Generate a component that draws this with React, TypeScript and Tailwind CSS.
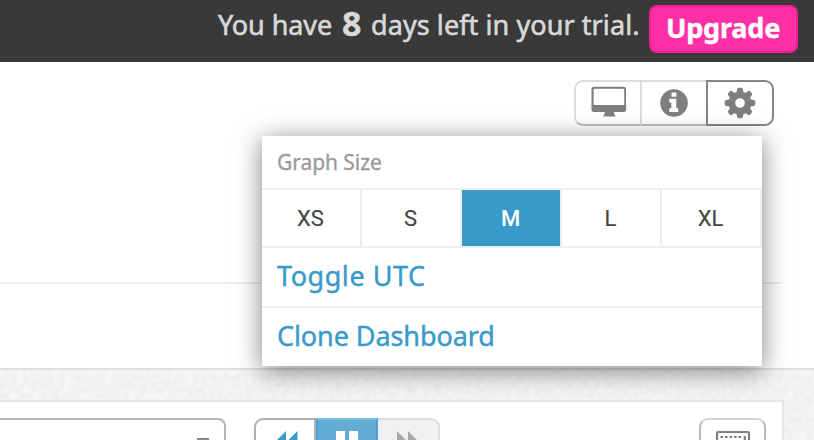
import React from "react";

const sizes = ["XS", "S", "M", "L", "XL"];

function MonitorIcon() {
  return (
    <svg width="36" height="32" viewBox="0 0 36 32" className="block">
      <path
        fill="#7f7f7f"
        fillRule="evenodd"
        d="M3 .8h29.600a2.500 2.500 0 0 1 2.500 2.500v20.100a2.500 2.500 0 0 1-2.500 2.500H22.800l.7 2.800q1 .3 1 1.900H12.200q0-1.600 1-1.900l.7-2.800H3a2.500 2.500 0 0 1-2.500-2.500V3.300A2.500 2.500 0 0 1 3 .8zm.8 1.900a1.200 1.200 0 0 0-1.200 1.200V19h30.600V3.900a1.200 1.200 0 0 0-1.200-1.200z"
      />
    </svg>
  );
}

function InfoIcon() {
  return (
    <svg width="28" height="28" viewBox="0 0 28 28" className="block">
      <circle cx="14" cy="14" r="13.800" fill="#7f7f7f" />
      <path fill="#fff" d="M11.500 3.400h4.800v4.400h-4.800zM9.300 9.800h7v9.400h2V23H9.300v-3.800h2v-5.600h-2z" />
    </svg>
  );
}

function GearIcon() {
  const teeth = [0, 45, 90, 135, 180, 225, 270, 315];
  return (
    <svg width="32" height="32" viewBox="-16 -16 32 32" className="block" fill="#7f7f7f">
      {teeth.map((a) => (
        <path key={a} transform={`rotate(${a})`} d="M-3.800-9L-2.900-13.500Q-2.700-15.300-1.200-15.300H1.200Q2.700-15.300 2.900-13.500L3.800-9z" />
      ))}
      <path fillRule="evenodd" d="M0-11.500a11.500 11.500 0 1 0 0 23a11.500 11.500 0 1 0 0-23zM0-4.800a4.800 4.800 0 1 1 0 9.600a4.800 4.800 0 1 1 0-9.600z" />
    </svg>
  );
}

function PaperTexture() {
  return (
    <svg className="absolute inset-0 h-full w-full">
      <filter id="paper" x="0" y="0" width="100%" height="100%">
        <feTurbulence type="fractalNoise" baseFrequency="0.17" numOctaves="2" seed="4" />
        <feColorMatrix values="0 0 0 0 1  0 0 0 0 1  0 0 0 0 1  0.900 0 0 0 -0.200" />
      </filter>
      <rect width="100%" height="100%" filter="url(#paper)" />
    </svg>
  );
}

function SizeMenu() {
  return (
    <div className="absolute left-[262px] top-[136px] z-10 h-[230px] w-[500px] bg-white shadow-[0_4px_24px_rgba(0,0,0,0.5)]">
      <div className="flex h-[52px] items-center pl-[15px] text-[21px] leading-none tracking-[-0.050px] text-[#999] [-webkit-text-stroke:0.3px]">
        Graph Size
      </div>
      <div className="flex h-[60px] border-y-2 border-[#eee] text-[22px] text-[#444] [-webkit-text-stroke:0.15px]">
        {sizes.map((s) => (
          <div
            key={s}
            className={`flex w-[100px] items-center justify-center border-r-2 border-[#eee] pr-px font-['Roboto',sans-serif] ${s === "M" ? "bg-[#3a99cb] bg-clip-padding font-medium text-white [-webkit-text-stroke:0px]" : ""}`}
          >
            {s}
          </div>
        ))}
      </div>
      <div className="flex h-[60px] items-center border-b-2 border-[#eee] pb-[3px] pl-[15px] text-[27px] leading-none tracking-[0.550px] text-[#3a99cb] [-webkit-text-stroke:0.4px]">
        Toggle UTC
      </div>
      <div className="flex h-[58px] items-center pb-[3px] pl-[15px] text-[27px] leading-none tracking-[-0.080px] text-[#3a99cb] [-webkit-text-stroke:0.4px]">
        Clone Dashboard
      </div>
    </div>
  );
}

export default function App() {
  return (
    <div className="relative flex h-[440px] w-[814px] flex-col overflow-hidden bg-white font-['Noto_Sans',sans-serif]">
      <header className="flex h-[62px] shrink-0 bg-[#393939] pl-[218px] text-[#d8d8d8]">
        <span className="w-[124px] whitespace-nowrap pt-[5px] text-[27px] leading-[40px] tracking-[-0.080px] [-webkit-text-stroke:0.6px]">
          You have
        </span>
        <span className="w-[29px] pt-[3px] text-[34px] font-bold leading-[40px] [-webkit-text-stroke:0.4px]">8</span>
        <span className="w-[278px] whitespace-nowrap pt-[5px] text-[27px] leading-[40px] tracking-[0.080px] [-webkit-text-stroke:0.6px]">
          days left in your trial.
        </span>
        <button className="mt-[5px] flex h-[48px] w-[149px] items-center justify-center rounded-[8px] border-2 border-[#f71b95] bg-[#ff2fa6] pb-1 pr-px text-[27px] font-bold leading-none tracking-[-0.180px] text-white [-webkit-text-stroke:0.4px]">
          Upgrade
        </button>
      </header>

      <section className="flex h-[308px] shrink-0 flex-col border-b-2 border-[#dfdfdf]">
        <div className="mr-8 flex h-[222px] justify-end border-b-2 border-[#eee] pr-2 pt-[18px]">
          <div className="flex h-[46px]">
            <button className="flex w-[68px] justify-center rounded-l-[9px] border-2 border-[#ddd] border-b-[#bbb] pl-px pt-[4px]">
              <MonitorIcon />
            </button>
            <button className="flex w-[64px] justify-center border-y-2 border-t-[#ddd] border-b-[#bbb] pr-px pt-[7px]">
              <InfoIcon />
            </button>
            <button className="flex w-[68px] justify-center rounded-r-[9px] border-2 border-[#858585] pr-px pt-[5px]">
              <GearIcon />
            </button>
          </div>
        </div>
      </section>

      <main className="relative flex h-[70px] shrink-0 bg-[#eee] pt-[30px]">
        <PaperTexture />
        <div className="relative flex h-[40px] w-[784px] overflow-hidden border-r-2 border-t-2 border-[#e6e6e6] bg-white pt-4">
          <div className="h-[48px] w-[226px] shrink-0 rounded-tr-[8px] border-r-2 border-t-2 border-[#b5b5b5] pl-[197px] pt-[18px]">
            <div className="h-2 w-3 bg-[#858585]" />
          </div>
          <div className="ml-[28px] flex h-[48px] shrink-0">
            <div className="w-[62px] rounded-tl-[9px] border-2 border-[#b0b0b0] pl-[17px] pt-[9px]">
              <svg width="30" height="28" viewBox="0 0 30 28" fill="#3a99cb">
                <path d="M1 14L13 2v24zM12.500 14L24.500 2v24z" />
              </svg>
            </div>
            <div className="flex w-[62px] gap-[4px] border-x-2 border-t-2 border-[#62add4] border-t-[#7fc0e0] border-l-[#4fa0cb] border-r-[#4fa0cb] bg-[#62add4] pl-[18px] pt-[11px]">
              <div className="h-8 w-[9px] bg-white" />
              <div className="h-8 w-[9px] bg-white" />
            </div>
            <div className="w-[62px] rounded-tr-[9px] border-r-2 border-t-2 border-[#ddd] bg-[#f1f1f1] pl-[19px] pt-[9px]">
              <svg width="30" height="28" viewBox="0 0 30 28" fill="#aaa">
                <path d="M0 2l12 12L0 26zM11 2l12 12-12 12z" />
              </svg>
            </div>
          </div>
          <div className="ml-[259px] h-[48px] w-[67px] shrink-0 rounded-t-[9px] border-2 border-[#bbb] border-t-[#d3d3d3] pl-[15px] pt-[11px]">
            <svg width="35" height="24" viewBox="0 0 35 24" fill="none" stroke="#7f7f7f">
              <rect x="1" y="1" width="32" height="20" rx="1.500" strokeWidth="2.200" />
              <path d="M4.500 6h22M4.500 10.500h22" strokeWidth="2.200" strokeDasharray="2.600 1.900" />
              <path d="M28.800 5v6" strokeWidth="2.200" />
            </svg>
          </div>
        </div>
      </main>

      <SizeMenu />
    </div>
  );
}
